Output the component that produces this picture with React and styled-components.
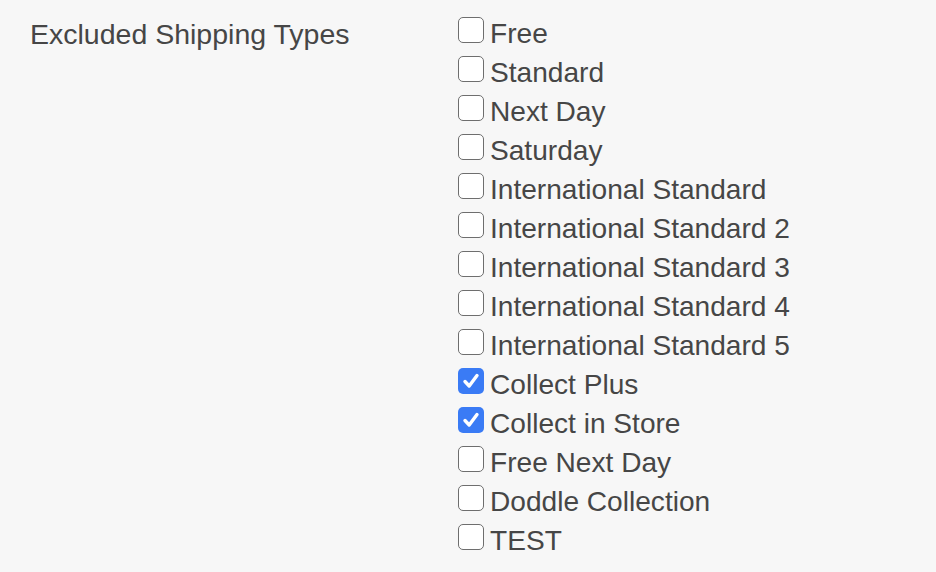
import styled, { createGlobalStyle } from 'styled-components'

const GlobalStyle = createGlobalStyle`
  html, body {
    margin: 0;
    padding: 0;
    background: #f7f7f7;
  }
  body {
    font-family: "Liberation Sans", Arial, sans-serif;
    color: #464646;
  }
`

const Form = styled.div`
  display: grid;
  grid-template-columns: 428px 1fr;
  padding: 14px 0 0 30px;
  width: 936px;
  height: 572px;
  box-sizing: border-box;
`

const FieldLabel = styled.div`
  font-size: 28.5px;
  line-height: 39px;
  padding-top: 1px;
`

const Options = styled.div`
  display: flex;
  flex-direction: column;
`

const Option = styled.label`
  display: flex;
  align-items: flex-start;
  gap: 6px;
  font-size: 28.1px;
  line-height: 39px;
  height: 39px;
`

const Box = styled.span`
  flex: none;
  width: 26px;
  height: 26px;
  margin-top: 3px;
  box-sizing: border-box;
  border-radius: 5px;
  border: ${p => (p.checked ? 'none' : '1.5px solid #6e6e6e')};
  background: ${p => (p.checked ? '#3a7bf5' : '#fff')};
  display: flex;
  align-items: center;
  justify-content: center;
`

const types = [
  ['Free', false],
  ['Standard', false],
  ['Next Day', false],
  ['Saturday', false],
  ['International Standard', false],
  ['International Standard 2', false],
  ['International Standard 3', false],
  ['International Standard 4', false],
  ['International Standard 5', false],
  ['Collect Plus', true],
  ['Collect in Store', true],
  ['Free Next Day', false],
  ['Doddle Collection', false],
  ['TEST', false],
]

const Check = () => (
  <svg width="20" height="20" viewBox="0 0 20 20">
    <path d="M4 10.5 L8.2 15 L16 4.5" fill="none" stroke="#fff" strokeWidth="3.4" strokeLinecap="round" strokeLinejoin="round" />
  </svg>
)

export default function App() {
  return (
    <>
      <GlobalStyle />
      <Form>
        <FieldLabel>Excluded Shipping Types</FieldLabel>
        <Options>
          {types.map(([name, on]) => (
            <Option key={name}>
              <Box checked={on}>{on && <Check />}</Box>
              {name}
            </Option>
          ))}
        </Options>
      </Form>
    </>
  )
}
